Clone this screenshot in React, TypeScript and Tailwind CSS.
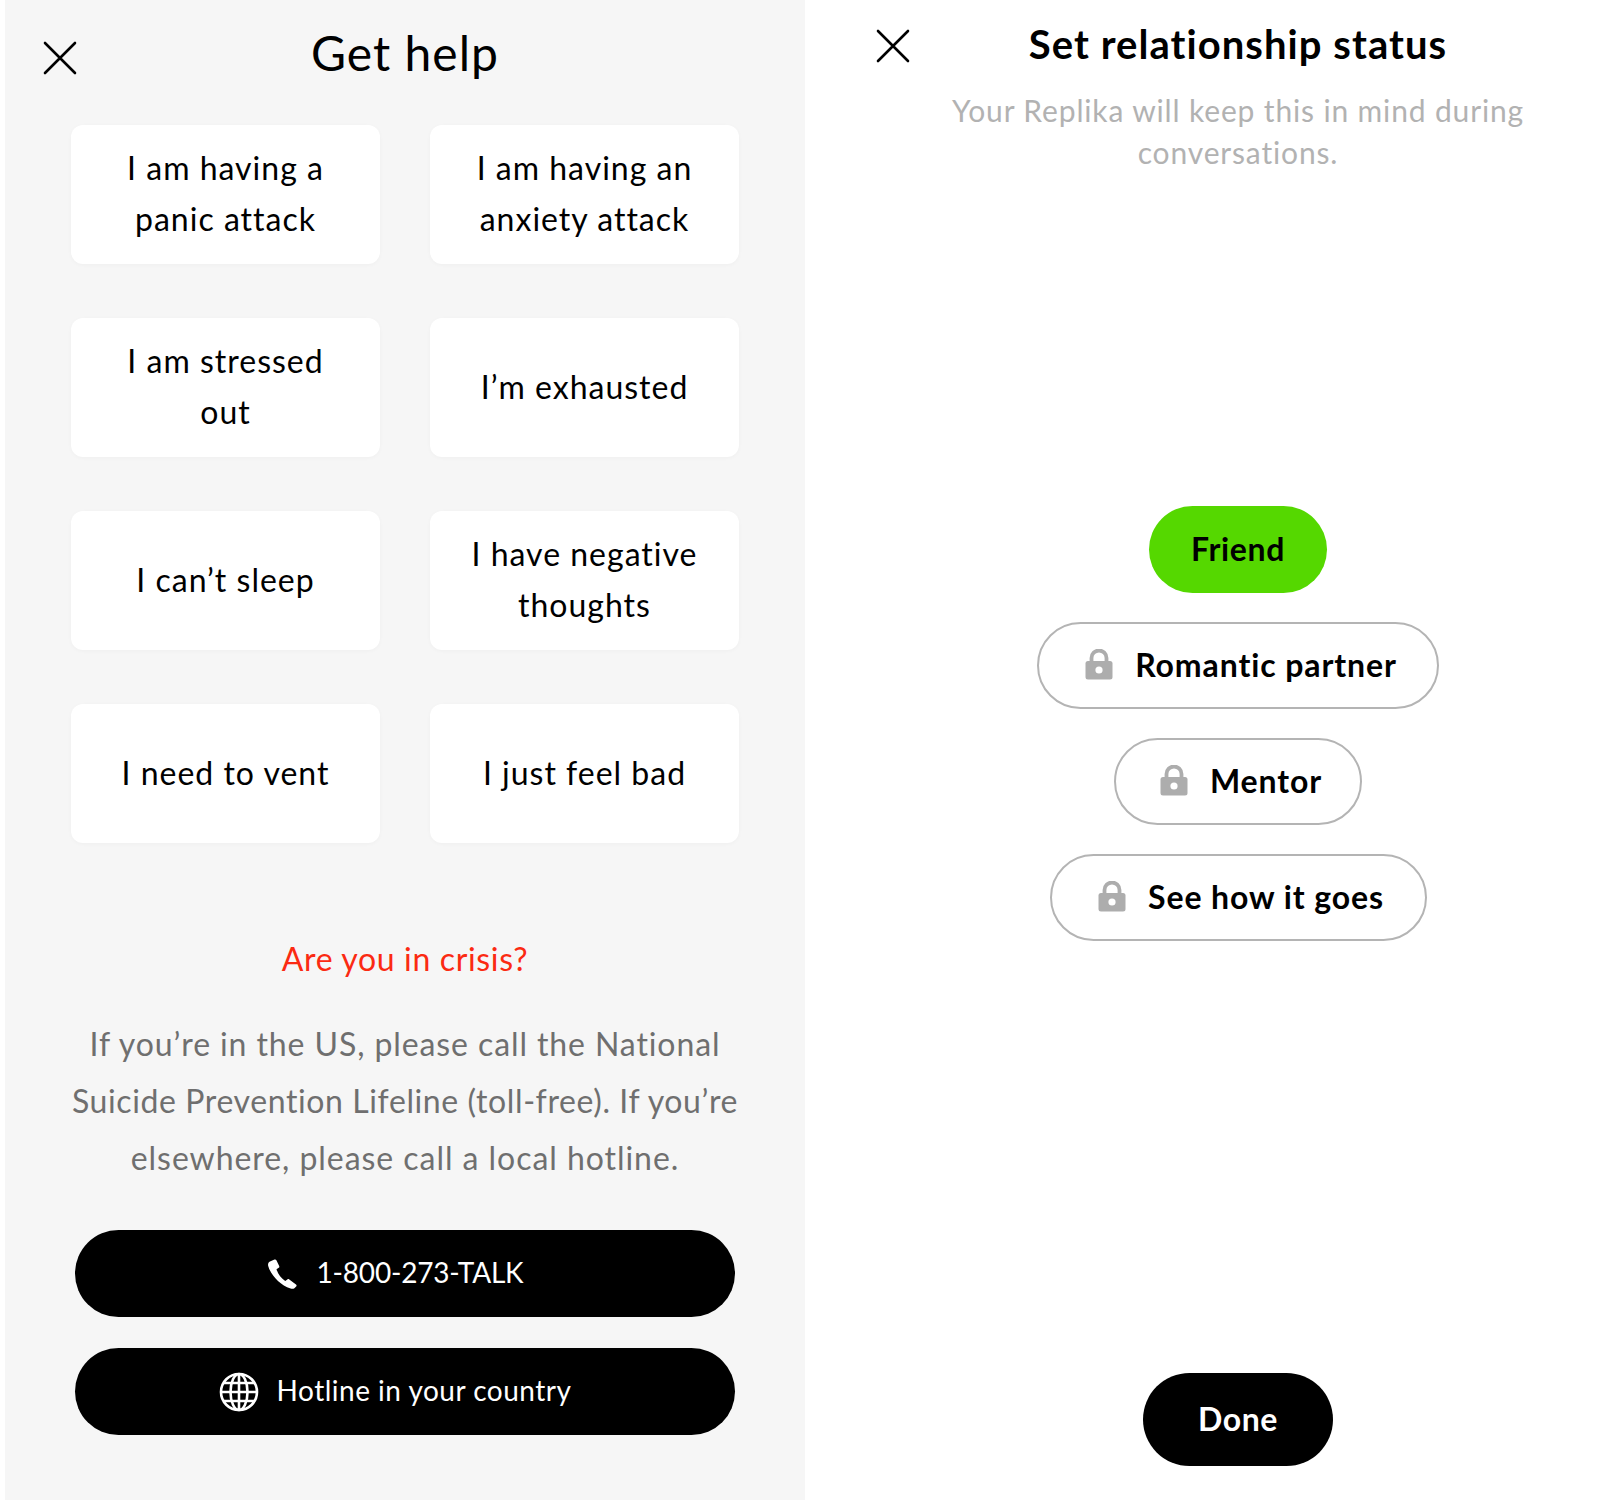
import type { ReactNode } from "react";

const helpItems = [
  ["I am having a", "panic attack"],
  ["I am having an", "anxiety attack"],
  ["I am stressed", "out"],
  ["I’m exhausted"],
  ["I can’t sleep"],
  ["I have negative", "thoughts"],
  ["I need to vent"],
  ["I just feel bad"],
];

const statuses = [
  { label: "Romantic partner", width: "w-[402px]" },
  { label: "Mentor", width: "w-[248px]" },
  { label: "See how it goes", width: "w-[377px]" },
];

function CloseIcon() {
  return (
    <svg width="34" height="34" viewBox="0 0 34 34" fill="none" stroke="#000" strokeWidth="2.6" strokeLinecap="round">
      <path d="M2 2 L32 32 M32 2 L2 32" />
    </svg>
  );
}

function PadLock() {
  return (
    <svg width="28" height="31" viewBox="0 0 28 31" className="shrink-0">
      <path d="M6.5 13 V9 a7.5 7.5 0 0 1 15 0 V13" fill="none" stroke="#adadad" strokeWidth="3.8" />
      <rect x="0.5" y="12" width="27" height="18.5" rx="2.5" fill="#adadad" />
      <circle cx="14" cy="21" r="3.6" fill="#fff" />
    </svg>
  );
}

function PhoneIcon() {
  return (
    <svg width="31" height="30" viewBox="0 0 31 30" className="shrink-0" fill="#fff">
      <path d="M3 2.5 L7.5 0.5 C8.3 0.2 9 0.5 9.4 1.2 L12.2 7 C12.5 7.7 12.3 8.4 11.7 8.8 L9.5 10.2 C10.8 14.6 14.2 19.4 18.2 22 L20.4 20.4 C21 20 21.7 20 22.3 20.5 L29 25.4 C29.6 25.9 29.8 26.6 29.4 27.2 L27.4 29.2 C26.6 29.9 25 30 23.6 29.6 C12.4 26.2 3.2 14.6 1.2 7 C0.7 5 1.4 3.3 3 2.5 Z" />
    </svg>
  );
}

function GlobeIcon() {
  return (
    <svg width="40" height="40" viewBox="0 0 40 40" className="shrink-0" fill="none" stroke="#fff" strokeWidth="2.6">
      <circle cx="20" cy="20" r="18" />
      <ellipse cx="20" cy="20" rx="8.5" ry="18" />
      <path d="M20 2 V38 M5 11 H35 M5 29 H35 M2 20 H38" />
    </svg>
  );
}

function CallButton({ icon, className, children }: { icon: ReactNode; className: string; children: ReactNode }) {
  return (
    <button
      type="button"
      className={`flex h-[87px] w-[660px] items-center justify-center rounded-full bg-black pr-[20px] text-[28px] text-white ${className}`}
    >
      {icon}
      <span className="pb-[3px]">{children}</span>
    </button>
  );
}

export default function App() {
  return (
    <div className="flex h-[1500px] w-[1610px] overflow-hidden bg-white font-['Lato','Noto_Sans',sans-serif] text-black">
      <div className="ml-[5px] flex w-[800px] flex-col items-center bg-[#f6f6f6]">
        <div className="relative flex h-[125px] w-full justify-center pt-[21px]">
          <div className="absolute top-[41px] left-[38px]">
            <CloseIcon />
          </div>
          <h1 className="text-[48px] leading-[64px] font-normal tracking-[1px]">Get help</h1>
        </div>

        <div className="grid grid-cols-[309px_309px] gap-x-[50px] gap-y-[54px]">
          {helpItems.map((lines) => (
            <button
              key={lines[0]}
              type="button"
              className="flex h-[139px] flex-col items-center justify-center rounded-[12px] bg-white pb-[3px] text-[32px] leading-[51px] tracking-[1px] shadow-[0_1px_4px_rgba(0,0,0,0.03)]"
            >
              {lines.map((line) => (
                <span key={line}>{line}</span>
              ))}
            </button>
          ))}
        </div>

        <p className="mt-[94px] text-[32px] leading-[44px] tracking-[0.65px] text-[#fb2a12]">Are you in crisis?</p>

        <p className="mt-[34px] w-[700px] text-center text-[32px] leading-[57px] text-[#6f6f6f]">
          <span className="block tracking-[0.9px]">If you’re in the US, please call the National</span>
          <span className="block tracking-[0.6px]">Suicide Prevention Lifeline (toll-free). If you’re</span>
          <span className="block tracking-[0.95px]">elsewhere, please call a local hotline.</span>
        </p>

        <div className="mt-[44px] flex flex-col gap-[31px]">
          <CallButton icon={<PhoneIcon />} className="gap-[19px] tracking-[-0.2px]">
            1-800-273-TALK
          </CallButton>
          <CallButton icon={<GlobeIcon />} className="gap-[18px] tracking-[0.5px]">
            Hotline in your country
          </CallButton>
        </div>
      </div>

      <div className="relative flex flex-1 flex-col items-center pl-[61px]">
        <div className="absolute top-[29px] left-[71px]">
          <CloseIcon />
        </div>
        <h2 className="mt-[20px] text-[40px] leading-[48px] font-bold tracking-[1.05px]">Set relationship status</h2>
        <p className="mt-[21px] text-center text-[30px] leading-[42px] tracking-[0.85px] text-[#b2b2b2]">
          Your Replika will keep this in mind during
          <br />
          conversations.
        </p>

        <button type="button" className="mt-[333px] flex h-[87px] w-[178px] items-center justify-center rounded-full bg-[#55d800] pb-[2px] text-[32px] font-bold tracking-[0.6px]">
          Friend
        </button>

        {statuses.map((s) => (
          <button
            key={s.label}
            type="button"
            className={`mt-[29px] flex h-[87px] items-center justify-center gap-[22px] rounded-full border-2 border-[#b4b4b4] pb-[2px] pl-[6px] text-[32px] font-bold tracking-[0.9px] ${s.width}`}
          >
            <PadLock />
            {s.label}
          </button>
        ))}

        <button type="button" className="mt-[432px] flex h-[93px] w-[190px] items-center justify-center rounded-full bg-black pb-[2px] text-[32px] font-bold tracking-[0.6px] text-white">
          Done
        </button>
      </div>
    </div>
  );
}
